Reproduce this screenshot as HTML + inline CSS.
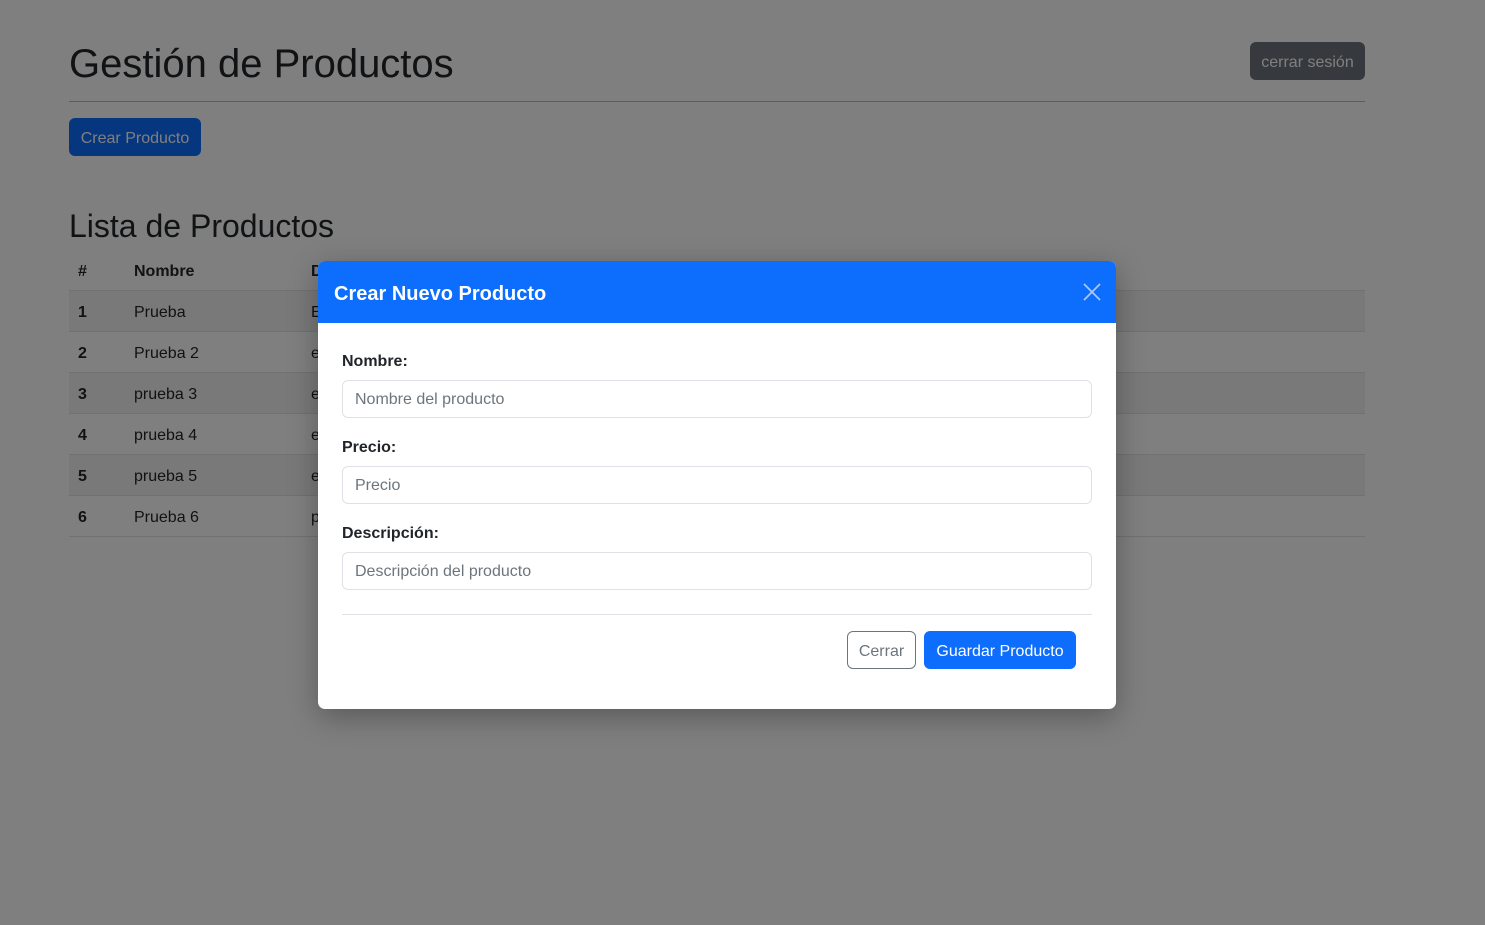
<!DOCTYPE html>
<html><head><meta charset="utf-8"><style>
*{box-sizing:border-box;margin:0;padding:0}
body{width:1485px;height:925px;background:#fff;font-family:"Liberation Sans",sans-serif;color:#212529;position:relative;overflow:hidden;font-size:16px}
.abs{position:absolute}
h1{position:absolute;left:69px;top:40px;font-size:40px;font-weight:500;line-height:48px}
.line{left:69px;top:101px;width:1296px;height:1px;background:#bbb}
.btn{position:absolute;border-radius:6px;font-size:16px;display:flex;align-items:center;justify-content:center;padding-top:3px}
h2{position:absolute;left:69px;top:206px;font-size:32px;font-weight:500;line-height:40px}
.row{position:absolute;left:69px;width:1296px;height:41px;border-bottom:1px solid #dee2e6;font-size:16px}
.row span{position:absolute;top:13px}
.ov{left:0;top:0;width:1485px;height:925px;background:rgba(0,0,0,.5)}
.modal{left:318px;top:261px;width:798px;height:448px;background:#fff;border-radius:7px;overflow:hidden;box-shadow:0 8px 30px rgba(0,0,0,.3)}
.mh{height:62px;background:#0d6efd;color:#fff;font-weight:bold;font-size:20px;padding:22px 16px 0}
label{position:absolute;left:24px;font-weight:bold;font-size:16px;color:#212529}
.inp{position:absolute;left:24px;width:750px;height:38px;border:1px solid #dee2e6;border-radius:6px;padding:10px 12px 0;color:#6c757d}
</style></head><body>
<h1>Gestión de Productos</h1>
<div class="btn" style="left:1250px;top:42px;width:115px;height:38px;background:#6c757d;color:#fff">cerrar sesión</div>
<div class="abs line"></div>
<div class="btn" style="left:69px;top:118px;width:132px;height:38px;background:#0d6efd;color:#fff">Crear Producto</div>
<h2>Lista de Productos</h2>
<div class="row" style="top:250px;font-weight:bold"><span style="left:9px">#</span><span style="left:65px">Nombre</span><span style="left:242px">Descripción</span></div>
<div class="row" style="top:291px;background:#f2f2f2"><span style="left:9px;font-weight:bold">1</span><span style="left:65px">Prueba</span><span style="left:242px">E</span></div>
<div class="row" style="top:332px"><span style="left:9px;font-weight:bold">2</span><span style="left:65px">Prueba 2</span><span style="left:242px">e</span></div>
<div class="row" style="top:373px;background:#f2f2f2"><span style="left:9px;font-weight:bold">3</span><span style="left:65px">prueba 3</span><span style="left:242px">e</span></div>
<div class="row" style="top:414px"><span style="left:9px;font-weight:bold">4</span><span style="left:65px">prueba 4</span><span style="left:242px">e</span></div>
<div class="row" style="top:455px;background:#f2f2f2"><span style="left:9px;font-weight:bold">5</span><span style="left:65px">prueba 5</span><span style="left:242px">e</span></div>
<div class="row" style="top:496px"><span style="left:9px;font-weight:bold">6</span><span style="left:65px">Prueba 6</span><span style="left:242px">p</span></div>
<div class="abs ov"></div>
<div class="abs modal">
<div class="mh">Crear Nuevo Producto</div>
<svg class="abs" style="left:765px;top:22px" width="18" height="18"><path d="M1 1L17 17M17 1L1 17" stroke="#a8c8ff" stroke-width="1.8"/></svg>
<label style="top:92px">Nombre:</label>
<div class="inp" style="top:119px">Nombre del producto</div>
<label style="top:178px">Precio:</label>
<div class="inp" style="top:205px">Precio</div>
<label style="top:264px">Descripción:</label>
<div class="inp" style="top:291px">Descripción del producto</div>
<div class="abs" style="left:24px;top:353px;width:750px;height:1px;background:#dee2e6"></div>
<div class="btn" style="left:529px;top:370px;width:69px;height:38px;border:1px solid #6c757d;color:#6c757d">Cerrar</div>
<div class="btn" style="left:606px;top:370px;width:152px;height:38px;background:#0d6efd;color:#fff">Guardar Producto</div>
</div>
</body></html>
